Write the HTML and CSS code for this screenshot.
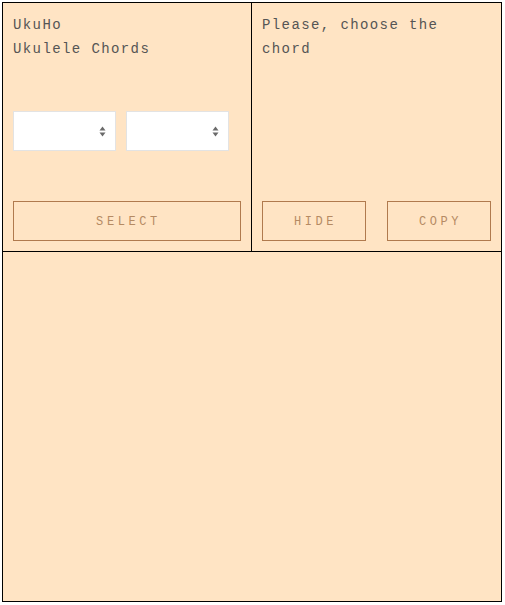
FILE: index.html
```html
<!DOCTYPE html>
<html>
<head>
<meta charset="utf-8">
<link rel="stylesheet" href="styles.css">
</head>
<body>
<div class="app">
  <div class="top">
    <div class="cell cell-left">
      <div class="title">UkuHo<br>Ukulele Chords</div>
      <div class="selects">
        <div class="select"><span class="arrows"><svg width="7" height="11" viewBox="0 0 7 11"><path d="M3.5 0.5 L6.5 4.5 L0.5 4.5 Z" fill="#6a6a6a"/><path d="M0.5 6.5 L6.5 6.5 L3.5 10.5 Z" fill="#6a6a6a"/></svg></span></div>
        <div class="select"><span class="arrows"><svg width="7" height="11" viewBox="0 0 7 11"><path d="M3.5 0.5 L6.5 4.5 L0.5 4.5 Z" fill="#6a6a6a"/><path d="M0.5 6.5 L6.5 6.5 L3.5 10.5 Z" fill="#6a6a6a"/></svg></span></div>
      </div>
      <button class="btn btn-wide">SELECT</button>
    </div>
    <div class="cell cell-right">
      <div class="title">Please, choose the chord</div>
      <div class="btn-row">
        <button class="btn">HIDE</button>
        <button class="btn">COPY</button>
      </div>
    </div>
  </div>
  <div class="bottom"></div>
</div>
</body>
</html>
```
FILE: styles.css
```css
html, body {
  margin: 0;
  padding: 0;
  background: #ffffff;
}
body {
  padding: 2px;
}
.app {
  box-sizing: border-box;
  width: 500px;
  height: 600px;
  border: 1px solid #000;
  background: #ffe4c4;
  display: flex;
  flex-direction: column;
  font-family: "Courier New", "Liberation Mono", monospace;
  color: #555;
}
.top {
  display: flex;
  height: 249px;
  border-bottom: 1px solid #000;
  box-sizing: border-box;
}
.cell {
  box-sizing: border-box;
  width: 249px;
  height: 248px;
  padding: 10px;
  display: flex;
  flex-direction: column;
}
.cell-left {
  border-right: 1px solid #000;
}
.title {
  font-size: 14px;
  line-height: 24px;
  letter-spacing: 1.4px;
}
.selects {
  display: flex;
  gap: 10px;
  margin-top: 50px;
}
.select {
  box-sizing: border-box;
  width: 103px;
  height: 40px;
  background: #fff;
  border: 1px solid #e3e3e3;
  display: flex;
  align-items: center;
  justify-content: flex-end;
  padding-right: 9px;
}
.arrows {
  display: flex;
}
.btn {
  box-sizing: border-box;
  height: 40px;
  margin-top: auto;
  background: transparent;
  border: 1px solid #b07a4e;
  color: #b58a63;
  font-family: "Courier New", "Liberation Mono", monospace;
  font-size: 12px;
  letter-spacing: 3.6px;
  padding: 1px 0 0 3px;
  width: 104px;
}
.btn-wide {
  width: 228px;
}
.btn-row {
  margin-top: auto;
  display: flex;
  justify-content: space-between;
  width: 229px;
}
.bottom {
  flex: 1;
}
```
